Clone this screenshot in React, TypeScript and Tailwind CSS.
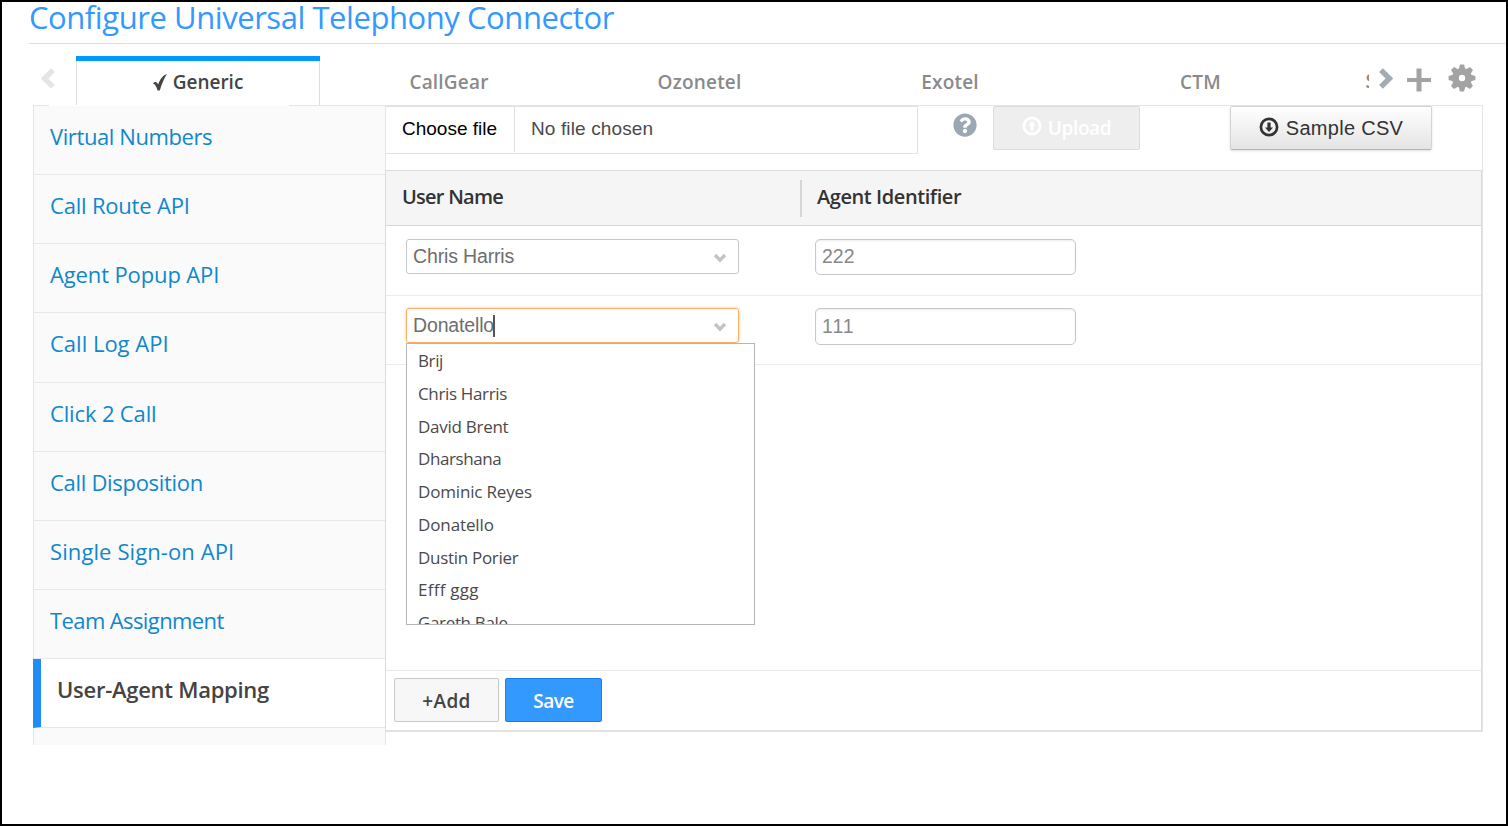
import { FaQuestionCircle } from "react-icons/fa";

const tabs = ["CallGear", "Ozonetel", "Exotel", "CTM"];

const menu = [
  { label: "Virtual Numbers", tracking: "tracking-[-0.4px]" },
  { label: "Call Route API", tracking: "tracking-[-0.2px]" },
  { label: "Agent Popup API", tracking: "tracking-[-0.13px]" },
  { label: "Call Log API", tracking: "tracking-normal" },
  { label: "Click 2 Call", tracking: "tracking-[-0.15px]" },
  { label: "Call Disposition", tracking: "tracking-[-0.3px]" },
  { label: "Single Sign-on API", tracking: "tracking-[0.1px]" },
  { label: "Team Assignment", tracking: "tracking-[-0.6px]" },
];

const users = [
  { name: "Brij", tracking: "tracking-[-0.4px]" },
  { name: "Chris Harris", tracking: "tracking-[-0.35px]" },
  { name: "David Brent", tracking: "tracking-[-0.27px]" },
  { name: "Dharshana", tracking: "tracking-[-0.4px]" },
  { name: "Dominic Reyes", tracking: "tracking-[-0.17px]" },
  { name: "Donatello", tracking: "tracking-[-0.12px]" },
  { name: "Dustin Porier", tracking: "tracking-[-0.3px]" },
  { name: "Efff ggg", tracking: "tracking-[0.25px]" },
  { name: "Gareth Bale", tracking: "tracking-[-0.35px]" },
];

const teeth = [0, 45, 90, 135, 180, 225, 270, 315];

const GearIcon = () => (
  <svg viewBox="-14 -14 28 28" className="size-7 text-[#a3a3a3]" fill="currentColor">
    <path
      fillRule="evenodd"
      d="M0-10A10 10 0 1 1 0 10 10 10 0 1 1 0-10ZM0-3.2A3.2 3.2 0 1 0 0 3.2 3.2 3.2 0 1 0 0-3.2Z"
    />
    {teeth.map((angle) => (
      <path key={angle} d="M-3.2-9L-2.1-13.4H2.1L3.2-9Z" transform={`rotate(${angle})`} />
    ))}
  </svg>
);

const CircleArrow = ({ up = false }: { up?: boolean }) => (
  <svg viewBox="0 0 20 20" className={up ? "-mt-1 size-5" : "-mt-[3px] size-5"} fill="none" stroke="currentColor">
    <circle cx="10" cy="10" r="8.1" strokeWidth="2.7" />
    <path
      d={up ? "M10 4.9L14 9.4H11.6V14.6H8.4V9.4H6Z" : "M10 15.1L14 10.6H11.6V5.4H8.4V10.6H6Z"}
      fill="currentColor"
      stroke="none"
    />
  </svg>
);

const TabBar = () => (
  <div className="flex h-[61px] pt-3">
    <div className="w-[43px] pl-2 pt-3">
      <svg viewBox="0 0 14 21" className="h-[21px] w-[14px] text-[#e3e5e7]" fill="none" stroke="currentColor">
        <path d="M12 2.2L3.6 10.5L12 18.8" strokeWidth="5.4" />
      </svg>
    </div>
    <div className="flex w-[1293px] gap-[7.5px] overflow-hidden text-[19px] font-semibold tracking-[0.2px] text-[#8a8a8a]">
      <div className="flex w-[244px] shrink-0 flex-col items-center border-t-5 border-t-[#0099ff]">
        <div className="flex h-11 w-full items-center justify-center gap-[6px] border-x border-[#dcdfe2] pb-[2px] text-[#444]">
          <svg viewBox="0 0 14 17" className="h-[17px] w-[14px]" fill="currentColor">
            <path d="M0 9.5C2.4 7 3.8 8 5.2 10.4 7 5.4 9.4 1.6 14 0 11 4.6 8.8 10 6.8 16.6H4.6C3.6 13 2.2 10 0 9.5Z" />
          </svg>
          <span className="tracking-normal">Generic</span>
        </div>
      </div>
      {tabs.map((tab) => (
        <div key={tab} className="flex h-[49px] w-[243px] shrink-0 items-center justify-center pt-[3px]">
          {tab}
        </div>
      ))}
      <div className="h-[49px] w-[243px] shrink-0 pl-[36px] pt-[11px]">SIP</div>
    </div>
    <div className="flex">
      <svg viewBox="0 0 14 21" className="ml-[10px] mt-3 h-[21px] w-[14px] text-[#a3abb3]" fill="none" stroke="currentColor">
        <path d="M2 2.2L10.4 10.5L2 18.8" strokeWidth="5.4" />
      </svg>
      <svg viewBox="0 0 24 24" className="ml-[14px] mt-3 size-6 text-[#a3a3a3]" fill="none" stroke="currentColor">
        <path d="M0 12H24" strokeWidth="4" />
        <path d="M12 0.5V23.5" strokeWidth="5" />
      </svg>
      <div className="ml-[17px] mt-2">
        <GearIcon />
      </div>
    </div>
  </div>
);

const Sidebar = () => (
  <nav className="flex h-[639px] w-[353px] shrink-0 flex-col border-r border-[#e4e5e6] bg-[#fafafa] text-[22px]">
    {menu.map((item) => (
      <a
        key={item.label}
        className={`flex h-[69.125px] shrink-0 items-center border-b border-l border-b-[#e6e7ea] border-l-[#e4e5e6] pb-[7px] pl-4 text-[#0f87cc] ${item.tracking}`}
      >
        {item.label}
      </a>
    ))}
    <a className="flex h-[69.125px] shrink-0 items-center border-b border-l-8 border-b-[#e6e7ea] border-l-[#1f8cf7] bg-white pb-[7px] pl-4 font-semibold tracking-[-0.27px] text-[#444]">
      User-Agent Mapping
    </a>
    <div className="grow border-l border-[#e4e5e6]" />
  </nav>
);

const UploadBar = () => (
  <div className="flex h-16 font-['Liberation_Sans',sans-serif] text-[19px]">
    <div className="flex h-12 w-[532px] border-y border-r border-[#e2e2e2]">
      <div className="flex h-[45px] w-[129px] items-center border-r border-[#e2e2e2] pl-4 text-black">
        Choose file
      </div>
      <div className="flex h-[45px] items-center pl-4 tracking-[0.13px] text-[#4a4a4a]">No file chosen</div>
    </div>
    <FaQuestionCircle className="ml-[35px] mt-[7px] size-6 text-[#9ba7b3]" />
    <button className="ml-4 flex h-[44px] w-[147px] items-center justify-center gap-[6px] rounded-[2px] border border-[#dcdcdc] bg-[#eee] font-['Open_Sans',sans-serif] font-semibold tracking-[-0.4px] text-white">
      <CircleArrow up />
      <span>Upload</span>
    </button>
    <button className="ml-[90px] flex h-[44px] w-[202px] items-center justify-center gap-[7px] rounded-[2px] border border-[#d4d4d4] border-b-[#b3b3b3] bg-linear-to-b from-white to-[#e4e4e4] text-[20px] tracking-[0.3px] text-[#333] shadow-sm">
      <CircleArrow />
      <span>Sample CSV</span>
    </button>
  </div>
);

const UserSelect = ({ name, open = false }: { name: string; open?: boolean }) => (
  <div className="relative w-[333px]">
    <div
      className={
        open
          ? "flex h-[35px] items-center rounded-[3px] border border-[#ffae66] pl-[6px] pr-3 shadow-[0_0_3px_#ffc48f]"
          : "flex h-[35px] items-center rounded-[3px] border border-[#c6c6c6] pl-[6px] pr-3"
      }
    >
      <span className="tracking-[-0.15px]">{name}</span>
      {open && <span className="-ml-px h-[22px] w-[2px] bg-[#555]" />}
      <svg viewBox="0 0 12 10" className="ml-auto mt-[3px] h-[10px] w-3 text-[#c4c4c4]" fill="none" stroke="currentColor">
        <path d="M1 2L6 7L11 2" strokeWidth="3.4" />
      </svg>
    </div>
    {open && (
      <ul className="absolute left-0 top-[35px] h-[282px] w-[349px] overflow-hidden border border-[#b5b5b5] bg-white pt-[0.4px] font-['Open_Sans',sans-serif] text-[17px] text-[#4a4a4a]">
        {users.map((user) => (
          <li key={user.name} className={`flex h-[32.75px] items-center pl-[11px] ${user.tracking}`}>
            {user.name}
          </li>
        ))}
      </ul>
    )}
  </div>
);

const MappingTable = () => (
  <div className="-ml-px flex h-[562px] w-[1097px] flex-col border border-b-2 border-[#dcdcdc] border-b-[#e2e2e2]">
    <div className="flex h-[55px] shrink-0 items-center border-b border-[#d9d9d9] bg-[#f5f5f5] text-[20px] font-semibold text-[#333]">
      <div className="flex h-[37px] w-[416px] items-center border-r-2 border-[#d6d6d6] pb-[3px] pl-4 tracking-[-0.75px]">
        User Name
      </div>
      <div className="pb-[3px] pl-[15px] tracking-[-0.42px]">Agent Identifier</div>
    </div>
    <div className="font-['Liberation_Sans',sans-serif] text-[19.5px] text-[#6e6e6e]">
      <div className="flex h-[70px] border-b border-[#ececec] pl-5 pt-[13px]">
        <UserSelect name="Chris Harris" />
        <div className="ml-[76px] flex h-9 w-[261px] items-center rounded-[5px] border border-[#c8c8c8] pl-[6px] text-[#888] shadow-[inset_0_1px_2px_#00000014]">
          222
        </div>
      </div>
      <div className="flex h-[69px] border-b border-[#ececec] pl-5 pt-[12px]">
        <UserSelect name="Donatello" open />
        <div className="ml-[76px] flex h-[37px] w-[261px] items-center rounded-[5px] border border-[#c8c8c8] pl-[6px] tracking-[1px] text-[#888] shadow-[inset_0_1px_2px_#00000014]">
          111
        </div>
      </div>
    </div>
    <div className="mt-auto flex h-[60px] shrink-0 gap-[6px] border-t border-[#e6e6e6] pl-2 pt-[7px] text-[19px] font-semibold">
      <button className="h-[44px] w-[105px] rounded-[2px] border border-[#c8c8c8] bg-[#f7f7f7] pt-[3px] tracking-[0.4px] text-[#444]">
        +Add
      </button>
      <button className="h-[44px] w-[97px] rounded-[2px] border border-[#1a80e6] bg-[#3399ff] pt-[3px] tracking-[-0.5px] text-white">
        Save
      </button>
    </div>
  </div>
);

const App = () => {
  return (
    <div className="h-[826px] w-[1508px] overflow-hidden border-2 border-black bg-white font-['Open_Sans',sans-serif]">
      <h1 className="ml-[27px] h-[42px] border-b border-[#dedede] text-[31px] leading-[30px] tracking-[-0.44px] text-[#3399ff]">
        Configure Universal Telephony Connector
      </h1>
      <div className="ml-[31px] w-[1450px]">
        <TabBar />
        <div className="flex h-px">
          <div className="w-4 bg-[#e4e5e6]" />
          <div className="w-60" />
          <div className="grow bg-[#e4e5e6]" />
        </div>
        <div className="flex">
          <Sidebar />
          <div className="h-[626px] w-[1097px] border-r border-[#e4e5e6]">
            <UploadBar />
            <MappingTable />
          </div>
        </div>
      </div>
    </div>
  );
};

export default App;
